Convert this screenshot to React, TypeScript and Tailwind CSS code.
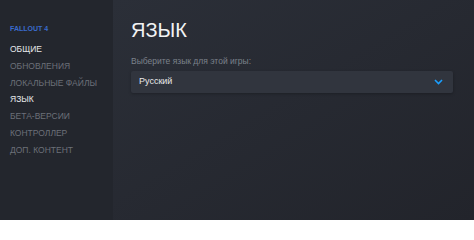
import React from "react";

const items = [
  { label: "ОБЩИЕ", active: true },
  { label: "ОБНОВЛЕНИЯ", active: false },
  { label: "ЛОКАЛЬНЫЕ ФАЙЛЫ", active: false },
  { label: "ЯЗЫК", active: true },
  { label: "БЕТА-ВЕРСИИ", active: false },
  { label: "КОНТРОЛЛЕР", active: false },
  { label: "ДОП. КОНТЕНТ", active: false },
];

export default function App() {
  return (
    <div
      className="flex h-[220px] w-[474px] overflow-hidden"
      style={{ fontFamily: '"Liberation Sans", Arial, sans-serif' }}
    >
      <div className="w-[113px] shrink-0 bg-[#23262d] pl-[10px] pt-[23px]">
        <div className="h-[11px] text-[7px] font-bold leading-[11px] text-[#3a6bcc]">
          FALLOUT 4
        </div>
        <ul className="mt-[7px]">
          {items.map((it) => (
            <li
              key={it.label}
              className={
                "h-[16.83px] whitespace-nowrap text-[8.5px] leading-[16.83px] " +
                (it.active ? "text-[#e6e8ea]" : "text-[#6c7079]")
              }
            >
              {it.label}
            </li>
          ))}
        </ul>
      </div>
      <div className="flex-1 bg-gradient-to-br from-[#2b2f38] to-[#22242b] pl-[18px] pt-[18px]">
        <h1 className="h-[24px] text-[20px] leading-[24px] text-[#f2f3f4]">ЯЗЫК</h1>
        <div className="mt-[13px] h-[12px] text-[8.5px] leading-[12px] text-[#7c828b]">
          Выберите язык для этой игры:
        </div>
        <div className="mt-[4px] flex h-[22px] w-[322px] items-center justify-between rounded-[2px] bg-[#31353e] pl-[8px] pr-[10px] shadow-[0_1px_3px_rgba(0,0,0,0.25)]">
          <span className="text-[9px] text-[#e8e9ea]">Русский</span>
          <svg width="9" height="6" viewBox="0 0 9 6" fill="none">
            <path d="M1 1l3.5 3.5L8 1" stroke="#1a9fff" strokeWidth="1.6" />
          </svg>
        </div>
      </div>
    </div>
  );
}
